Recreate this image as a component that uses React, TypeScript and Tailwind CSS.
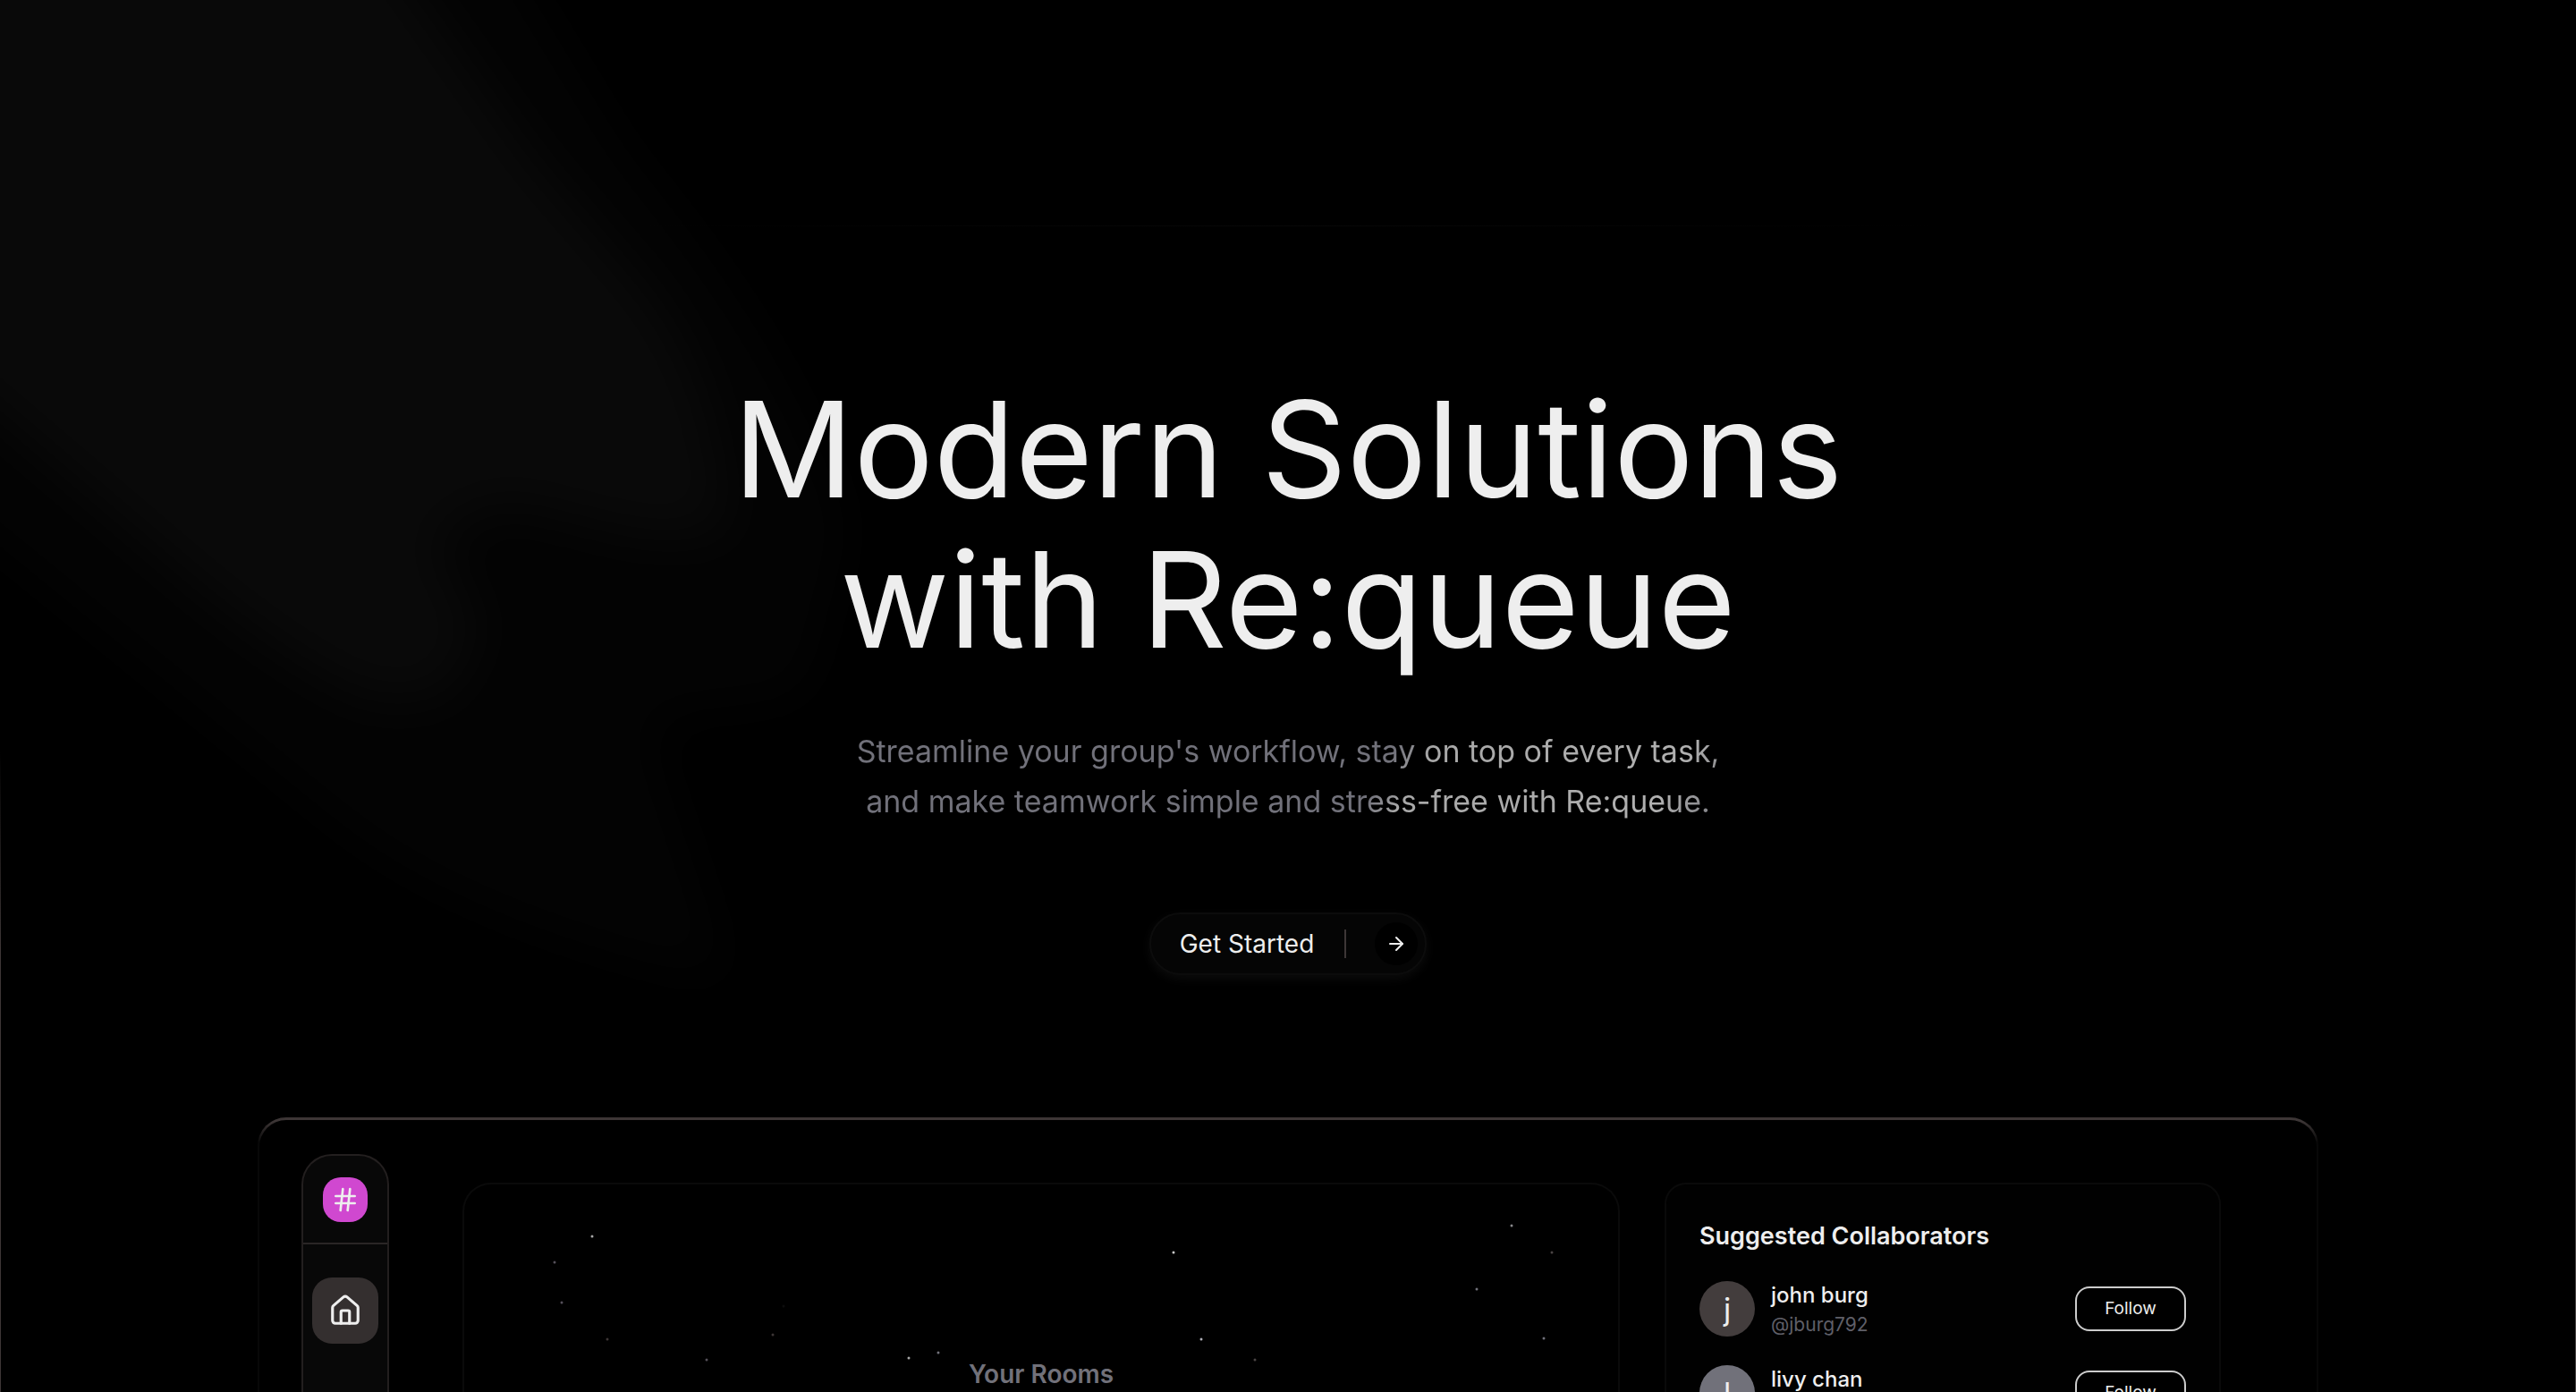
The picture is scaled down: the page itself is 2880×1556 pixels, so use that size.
import React from 'react';
import { ArrowRight, Hash, House } from 'lucide-react';

interface Star {
  x: number;
  y: number;
  color: string;
}

interface Collaborator {
  name: string;
  handle: string;
  avatar: string;
}

const stars: Star[] = [
  { x: 143, y: 58, color: '#a8a8a8' },
  { x: 101, y: 87, color: '#55505a' },
  { x: 109, y: 132, color: '#55505a' },
  { x: 160, y: 173, color: '#3d3636' },
  { x: 345, y: 168, color: '#3d3636' },
  { x: 357, y: 136, color: '#0d0d0d' },
  { x: 271, y: 196, color: '#55505a' },
  { x: 497, y: 194, color: '#a8a8a8' },
  { x: 530, y: 188, color: '#71717a' },
  { x: 1171, y: 46, color: '#88888c' },
  { x: 793, y: 76, color: '#c8c8c8' },
  { x: 1216, y: 76, color: '#4a4444' },
  { x: 1132, y: 117, color: '#71717a' },
  { x: 824, y: 173, color: '#b0b0b8' },
  { x: 884, y: 196, color: '#4a4444' },
  { x: 1207, y: 172, color: '#71717a' },
];

const collaborators: Collaborator[] = [
  { name: 'john burg', handle: '@jburg792', avatar: 'bg-[#433d3d]' },
  { name: 'livy chan', handle: '@livychan', avatar: 'bg-[#71717a]' },
];

const Backdrop: React.FC = () => (
  <div className="absolute inset-0" aria-hidden="true">
    <svg className="absolute left-0 top-0 h-[1200px] w-[1200px]" viewBox="0 0 1200 1200">
      <defs>
        <filter id="soft" x="-20%" y="-20%" width="140%" height="140%" colorInterpolationFilters="sRGB">
          <feGaussianBlur stdDeviation="32" />
        </filter>
      </defs>
      <g opacity="0.01">
        <path
          fill="#ffffff"
          filter="url(#soft)"
          d="M-160-160H500L700 170C800 290 900 430 950 590L900 780L720 800L820 1100C640 1060 480 1000 380 920L-160 480Z"
        />
      </g>
      <g opacity="0.022">
        <path
          fill="#ffffff"
          filter="url(#soft)"
          d="M-160-160H360L600 180L730 330C780 400 810 480 815 600L720 600L560 560L480 600L540 700L500 780L420 785C340 750 260 690 180 620L-160 330Z"
        />
      </g>
    </svg>
    <div className="absolute left-1/4 top-[252px] h-px w-1/2 bg-linear-to-r from-transparent via-[#080808] to-transparent" />
    <div className="absolute bottom-0 left-0 h-[716px] w-px bg-[linear-gradient(transparent,#3d3636_220px)]" />
    <div className="absolute bottom-0 right-0 h-[636px] w-px bg-[linear-gradient(transparent,#4a4545_220px)]" />
  </div>
);

const HeroSection: React.FC = () => {
  return (
    <section className="flex flex-col items-center pt-[418px] text-center">
      <h1 className="text-[149px] leading-[168px] text-[#eeeeee]">
        Modern Solutions
        <br />
        with Re:queue
      </h1>
      <p className="mt-[58px] bg-[linear-gradient(120deg,#71717a_60%,#a8a8a8_64%,#b0b0b0_92%,#8a8a8e_97%)] bg-clip-text text-[34px] leading-[56px] text-transparent">
        Streamline your group's workflow, stay on top of every task,
        <br />
        and make teamwork simple and stress-free with Re:queue.
      </p>
      <button className="mt-24 flex h-[70px] items-center rounded-full border-2 border-[#0c0c0c] bg-[#050505] pl-8 pr-2 text-[28px] text-[#eeeeee] shadow-[0_4px_12px_#0c0c0c]">
        Get Started
        <span className="ml-[34px] h-8 w-0.5 bg-[#3d3636]" />
        <span className="ml-8 flex size-12 items-center justify-center rounded-full bg-black">
          <ArrowRight className="size-6" />
        </span>
      </button>
    </section>
  );
};

const Sidebar: React.FC = () => (
  <nav className="w-[98px] shrink-0 self-stretch rounded-t-[34px] border-2 border-b-0 border-[#231f1f] bg-[#080808]">
    <div className="flex h-[99px] items-center justify-center border-b-2 border-[#2a2626]">
      <button
        aria-label="Rooms"
        className="flex size-[50px] items-center justify-center rounded-[20px] bg-[#d048d0] text-[#eeeeee]"
      >
        <Hash className="size-8" />
      </button>
    </div>
    <div className="flex justify-center pt-[37px]">
      <button
        aria-label="Home"
        className="flex size-[74px] items-center justify-center rounded-[22px] bg-[#342f2f] text-[#eeeeee]"
      >
        <House className="size-[38px]" />
      </button>
    </div>
  </nav>
);

const RoomsPanel: React.FC = () => (
  <section className="relative ml-[82px] flex-1 self-stretch rounded-t-[32px] border-2 border-b-0 border-[#0a0a0a] pt-[192px] text-center">
    <svg className="absolute inset-0 size-full" aria-hidden="true">
      {stars.map((star) => (
        <circle key={`${star.x}-${star.y}`} cx={star.x} cy={star.y} r="1.5" fill={star.color} />
      ))}
    </svg>
    <h2 className="text-[28px] font-semibold leading-[40px] text-[#71717a]">Your Rooms</h2>
  </section>
);

const CollaboratorsPanel: React.FC = () => (
  <aside className="ml-[50px] w-[622px] shrink-0 self-stretch rounded-t-3xl border-2 border-b-0 border-[#0a0a0a] bg-[#010101] px-[37px] pt-[38px]">
    <h2 className="text-[27px] font-semibold leading-[40px] text-[#eeeeee]">
      Suggested Collaborators
    </h2>
    <ul className="mt-[30px] flex flex-col gap-8">
      {collaborators.map((person) => (
        <li key={person.name} className="flex h-[62px] items-center">
          <span
            className={`flex size-[62px] items-center justify-center rounded-full text-[34px] text-[#eeeeee] ${person.avatar}`}
          >
            {person.name[0]}
          </span>
          <div className="ml-[18px] flex-1 pt-1">
            <p className="text-[24px] font-medium leading-[32px] text-[#eeeeee]">{person.name}</p>
            <p className="text-[21px] leading-[34px] text-[#5f5f68]">{person.handle}</p>
          </div>
          <button className="h-[50px] w-[124px] rounded-[16px] border-2 border-[#cccccc] bg-black text-[19px] text-[#eeeeee]">
            Follow
          </button>
        </li>
      ))}
    </ul>
  </aside>
);

const App: React.FC = () => {
  return (
    <div className="relative h-screen overflow-hidden bg-black font-['Inter',sans-serif]">
      <Backdrop />
      <main className="relative">
        <HeroSection />
        <div className="mx-auto mt-[159px] w-4/5 rounded-t-[32px] bg-[linear-gradient(#3d3636_4px,#080808_28px)] px-0.5 pt-[3px]">
          <div className="flex h-[640px] rounded-t-[30px] bg-black pl-[47px] pr-[107px] pt-[38px]">
            <Sidebar />
            <div className="flex flex-1 pt-8">
              <RoomsPanel />
              <CollaboratorsPanel />
            </div>
          </div>
        </div>
      </main>
    </div>
  );
};

export default App;
